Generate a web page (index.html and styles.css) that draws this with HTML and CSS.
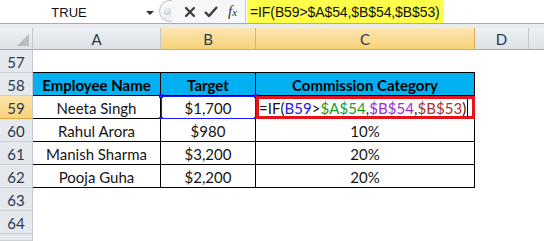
FILE: index.html
```html
<!DOCTYPE html>
<html>
<head>
<meta charset="utf-8">
<link rel="stylesheet" href="styles.css">
</head>
<body>
<div class="fbar">
  <div class="namebox"><span class="name">TRUE</span><span class="dd"></span></div>
  <div class="grip"><span class="dot"></span></div>
  <div class="tools">
    <svg class="ico" width="14" height="14" viewBox="0 0 14 14"><path d="M3 3 L11 11 M11 3 L3 11" stroke="#3a3a3a" stroke-width="2.2" stroke-linecap="round"/></svg>
    <svg class="ico" width="16" height="14" viewBox="0 0 16 14"><path d="M2 7 L6 11 L14 2" stroke="#3a3a3a" stroke-width="2.4" fill="none" stroke-linejoin="round"/></svg>
    <span class="fx">f<span class="x">x</span></span>
  </div>
  <div class="input"><span class="hl">=IF(B59&gt;$A$54,$B$54,$B$53)</span></div>
</div>
<div class="gap"></div>
<div class="sheet">
  <div class="ch corner"><span class="tri"></span></div>
  <div class="ch">A</div>
  <div class="ch sel">B</div>
  <div class="ch sel">C</div>
  <div class="ch">D</div>
  <div class="ch last"></div>

  <div class="rh">57</div>
  <div class="c tt"></div><div class="c tt"></div><div class="c tt"></div><div class="c"></div><div class="c"></div>

  <div class="rh">58</div>
  <div class="c t th first">Employee Name</div><div class="c t th">Target</div><div class="c t th">Commission Category</div><div class="c"></div><div class="c"></div>

  <div class="rh rsel">59</div>
  <div class="c t first">Neeta Singh</div>
  <div class="c t ref">$1,700<span class="h h1"></span><span class="h h2"></span><span class="h h3"></span><span class="h h4"></span></div>
  <div class="c t edit"><span class="f">=IF(<span class="b">B59</span>&gt;<span class="g">$A$54</span>,<span class="p">$B$54</span>,<span class="r">$B$53</span>)</span><span class="caret"></span></div>
  <div class="c"></div><div class="c"></div>

  <div class="rh">60</div>
  <div class="c t first">Rahul Arora</div><div class="c t">$980</div><div class="c t">10%</div><div class="c"></div><div class="c"></div>

  <div class="rh">61</div>
  <div class="c t first">Manish Sharma</div><div class="c t">$3,200</div><div class="c t">20%</div><div class="c"></div><div class="c"></div>

  <div class="rh">62</div>
  <div class="c t first">Pooja Guha</div><div class="c t">$2,200</div><div class="c t">20%</div><div class="c"></div><div class="c"></div>

  <div class="rh">63</div>
  <div class="c"></div><div class="c"></div><div class="c"></div><div class="c"></div><div class="c"></div>

  <div class="rh">64</div>
  <div class="c"></div><div class="c"></div><div class="c"></div><div class="c"></div><div class="c"></div>

  <div class="rh"></div>
  <div class="c"></div><div class="c"></div><div class="c"></div><div class="c"></div><div class="c"></div>
</div>
</body>
</html>
```
FILE: styles.css
```css
html, body { margin: 0; padding: 0; }
body {
  width: 544px;
  height: 241px;
  overflow: hidden;
  background: #fff;
  font-family: Lato, "Open Sans", sans-serif;
}
.fbar {
  display: flex;
  height: 23px;
  border-bottom: 1px solid #a8abb0;
  background: #fff;
  box-sizing: content-box;
}
.namebox {
  width: 159px;
  display: flex;
  align-items: center;
  font-family: "Liberation Sans", Arial, sans-serif;
  font-size: 13px;
  color: #111;
}
.name { flex: 1; text-align: center; padding-right: 8px; padding-top: 1px; }
.dd {
  width: 0; height: 0;
  border-left: 4px solid transparent;
  border-right: 4px solid transparent;
  border-top: 4px solid #333;
  margin-right: 5px;
  margin-top: 2px;
}
.grip {
  width: 13px;
  height: 22px;
  border-radius: 12px 0 0 12px;
  border: 1px solid #c6c9cf;
  border-right: none;
  background: linear-gradient(#fafafa, #eceef1);
  display: flex;
  align-items: center;
  justify-content: center;
  box-sizing: border-box;
}
.dot {
  width: 7px; height: 7px;
  border-radius: 50%;
  background: radial-gradient(circle at 40% 35%, #f4f4f4, #b9bcc1);
  margin-left: 3px;
}
.tools {
  width: 73px;
  display: flex;
  align-items: center;
  gap: 6px;
  padding-left: 11px;
  background: #f6f7f8;
  box-sizing: border-box;
}
.ico { display: block; }
.fx {
  font-family: "Liberation Serif", "Times New Roman", serif;
  font-style: italic;
  font-size: 15px;
  color: #333;
  margin-left: 3px;
}
.fx .x { font-size: 11px; }
.input {
  flex: 1;
  border-left: 1px solid #c6c9cf;
  display: flex;
  align-items: stretch;
  padding-left: 1px;
}
.hl {
  background: #ffff4a;
  font-family: "Liberation Sans", Arial, sans-serif;
  font-size: 14px;
  color: #111;
  padding: 4px 4px 0 3px;
  letter-spacing: -0.1px;
}
.gap {
  height: 4px;
  background: #e9ebee;
}
.sheet {
  display: grid;
  grid-template-columns: 33px 128px 95px 219px 54px 1fr;
  grid-template-rows: 22px repeat(8, 23px) 7px;
}
.ch {
  background: linear-gradient(#edf0f4, #dde2e8);
  border-right: 1px solid #c4c8ce;
  border-bottom: 1px solid #a8acb2;
  box-sizing: border-box;
  display: flex;
  align-items: center;
  justify-content: center;
  font-size: 15px;
  color: #2b3a52;
  padding-top: 1px;
}
.ch.sel {
  background: linear-gradient(#fbe6b4, #f8d278);
  border-right: 1px solid #e2b14c;
  border-bottom: 1px solid #e2a93c;
}
.ch.last { border-right: none; }
.corner { position: relative; }
.tri {
  position: absolute;
  right: 3px; bottom: 3px;
  width: 0; height: 0;
  border-left: 12px solid transparent;
  border-bottom: 12px solid #b9bdc3;
}
.rh {
  background: #e5e8ec;
  border-right: 1px solid #c4c8ce;
  border-bottom: 1px solid #cdd1d6;
  box-sizing: border-box;
  display: flex;
  align-items: center;
  justify-content: center;
  font-size: 15px;
  color: #2b3a52;
  padding-top: 1px;
}
.rh.rsel {
  background: linear-gradient(#fbe3a8, #f8d37c);
  border-bottom: 1px solid #e2a93c;
}
.c {
  box-sizing: border-box;
  background: #fff;
  display: flex;
  align-items: center;
  justify-content: center;
  font-size: 15px;
  color: #151515;
  white-space: nowrap;
  position: relative;
}
.c.tt { border-bottom: 1px solid #000; }
.c.t {
  border-right: 1px solid #000;
  border-bottom: 1px solid #000;
  padding-top: 1px;
}
.c.th {
  background: #00b0f0;
  font-weight: bold;
  color: #000;
}
.c.ref { outline: 1px solid #1a1aff; outline-offset: -1px; border-right-color: #1a1aff; border-bottom-color: #1a1aff; }
.h {
  position: absolute;
  width: 4px; height: 4px;
  background: #1a1aff;
}
.h1 { left: -2px; top: -2px; }
.h2 { right: -3px; top: -2px; }
.h3 { left: -2px; bottom: -3px; }
.h4 { right: -3px; bottom: -3px; }
.c.edit {
  justify-content: flex-start;
  border: 3px solid #e8121b;
  padding-left: 0;
  padding-top: 0;
}
.f { letter-spacing: 0.05px; }
.b { color: #2222e0; }
.g { color: #1c9a2a; }
.p { color: #9a2bd6; }
.r { color: #a8322a; }
.caret {
  width: 1px;
  height: 18px;
  background: #000;
  margin-left: 1px;
}
```
